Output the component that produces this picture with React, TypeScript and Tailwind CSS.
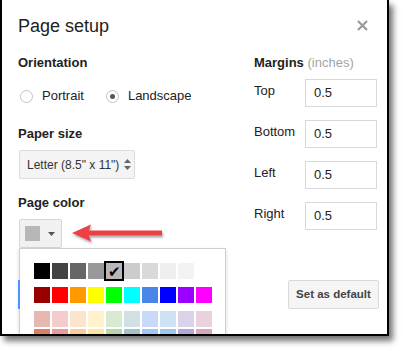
import React from "react";

const GRAYS = ["#000000", "#434343", "#666666", "#999999", "#b7b7b7", "#cccccc", "#d9d9d9", "#efefef", "#f3f3f3", "#ffffff"];
const BRIGHT = ["#980000", "#ff0000", "#ff9900", "#ffff00", "#00ff00", "#00ffff", "#4a86e8", "#0000ff", "#9900ff", "#ff00ff"];
const LIGHT3 = ["#e6b8af", "#f4cccc", "#fce5cd", "#fff2cc", "#d9ead3", "#d0e0e3", "#c9daf8", "#cfe2f3", "#d9d2e9", "#ead1dc"];
const LIGHT2 = ["#dd7e6b", "#ea9999", "#f9cb9c", "#ffe599", "#b6d7a8", "#a2c4c9", "#a4c2f4", "#9fc5e8", "#b4a7d6", "#d5a6bd"];

const MARGINS = ["Top", "Bottom", "Left", "Right"];

function Radio({ checked, label }: { checked?: boolean; label: string }) {
  return (
    <div className="flex items-center gap-[9px]">
      <span className="w-[13px] h-[13px] rounded-full border border-[#c4c4c4] bg-white flex items-center justify-center">
        {checked && <span className="w-[5px] h-[5px] rounded-full bg-[#555]" />}
      </span>
      <span className="text-[13px] text-[#222]">{label}</span>
    </div>
  );
}

function Swatch({ color, selected }: { color: string; selected?: boolean }) {
  if (selected) {
    return (
      <div className="w-[16px] h-[16px] relative" style={{ background: color }}>
        <div className="absolute -inset-[2px] border-2 border-black flex items-center justify-center">
          <span className="text-[15px] leading-none text-black">✔</span>
        </div>
      </div>
    );
  }
  return <div className="w-[16px] h-[16px]" style={{ background: color }} />;
}

function SwatchRow({ colors, sel }: { colors: string[]; sel?: number }) {
  return (
    <div className="flex gap-[2px]">
      {colors.map((c, i) => (
        <Swatch key={c} color={c} selected={i === sel} />
      ))}
    </div>
  );
}

export default function App() {
  return (
    <div className="w-[403px] h-[351px] bg-white overflow-hidden font-['Liberation_Sans',Arial,sans-serif] text-[#222]">
      <div className="w-[389px] h-[336px] border-l-2 border-r-2 border-b-2 border-black bg-white shadow-[4px_5px_6px_rgba(0,0,0,0.55)] relative overflow-hidden">
        {/* Title */}
        <div className="flex items-center pl-[16px] pr-[19px] pt-[14px] h-[38px]">
          <h1 className="flex-1 text-[18px] leading-[24px] text-[#222]">Page setup</h1>
          <svg width="11" height="11" viewBox="0 0 11 11" className="mb-[2px]">
            <path d="M1 1 L10 10 M10 1 L1 10" stroke="#9a9a9a" strokeWidth="2.2" />
          </svg>
        </div>

        <div className="flex pl-[16px] pt-[17px]">
          {/* Left column */}
          <div className="w-[236px] flex flex-col">
            <p className="text-[13px] font-bold leading-[16px]">Orientation</p>
            <div className="flex items-center gap-[22px] mt-[17px] pl-[2px] h-[16px]">
              <Radio label="Portrait" />
              <Radio checked label="Landscape" />
            </div>
            <p className="text-[13px] font-bold leading-[16px] mt-[22px]">Paper size</p>
            <div className="mt-[8px] ml-[1px] w-[116px] h-[29px] rounded-[2px] border border-[#dcdcdc] bg-[#f4f4f4] flex items-center pl-[7px] gap-[5px]">
              <span className="text-[12px] text-[#333]">Letter (8.5" x 11")</span>
              <svg width="7" height="11" viewBox="0 0 7 11">
                <path d="M0 4 L3.5 0 L7 4 Z M0 7 L3.5 11 L7 7 Z" fill="#666" />
              </svg>
            </div>
            <p className="text-[13px] font-bold leading-[16px] mt-[16px]">Page color</p>
            <div className="mt-[8px] ml-[1px] w-[43px] h-[29px] rounded-[2px] border border-[#d6d6d6] bg-[#f1f1f1] flex items-center pl-[5px] gap-[8px]">
              <span className="w-[15px] h-[15px] bg-[#b7b7b7]" />
              <svg width="7" height="4" viewBox="0 0 7 4">
                <path d="M0 0 L7 0 L3.5 4 Z" fill="#555" />
              </svg>
            </div>
            <div className="relative ml-[1px] w-[207px] h-[120px] border-t border-l border-r border-[#cfcfcf] bg-white pl-[14px] pt-[14px] shadow-[0_2px_4px_rgba(0,0,0,0.15)]">
              <div className="absolute left-[-2px] top-[31px] w-[2px] h-[29px] bg-[#4d90fe]" />
              <SwatchRow colors={GRAYS} sel={4} />
              <div className="mt-[8px]">
                <SwatchRow colors={BRIGHT} />
              </div>
              <div className="mt-[8px]">
                <SwatchRow colors={LIGHT3} />
              </div>
              <div className="mt-[2px]">
                <SwatchRow colors={LIGHT2} />
              </div>
            </div>
          </div>

          {/* Right column */}
          <div className="flex flex-col w-[125px]">
            <p className="text-[13px] leading-[16px]">
              <span className="font-bold">Margins</span>{" "}
              <span className="text-[#a3a3a3]">(inches)</span>
            </p>
            <div className="flex flex-col gap-[13px] mt-[8px]">
              {MARGINS.map(m => (
                <div key={m} className="flex items-center h-[28px]">
                  <span className="w-[51px] text-[13px] text-[#222] mt-[-4px]">{m}</span>
                  <div className="w-[72px] h-[28px] border border-[#d9d9d9] flex items-center pl-[8px] text-[13px] text-[#222]">
                    0.5
                  </div>
                </div>
              ))}
            </div>
            <button className="mt-[50px] ml-auto w-[91px] h-[29px] rounded-[2px] border border-[#d9d9d9] bg-[#f5f5f5] text-[11.5px] font-bold text-[#444]">
              Set as default
            </button>
          </div>
        </div>

        {/* Annotation arrow */}
        <svg className="absolute left-[68px] top-[223px]" width="96" height="22" viewBox="0 0 96 22">
          <defs>
            <filter id="sh" x="-10%" y="-30%" width="130%" height="180%">
              <feDropShadow dx="1" dy="2" stdDeviation="1.2" floodColor="#000" floodOpacity="0.35" />
            </filter>
          </defs>
          <path d="M2 10 L21 1.5 L19 7.5 L92 7.5 L92 12.5 L19 12.5 L21 18.5 Z" fill="#ec3f44" filter="url(#sh)" />
        </svg>
      </div>
    </div>
  );
}
